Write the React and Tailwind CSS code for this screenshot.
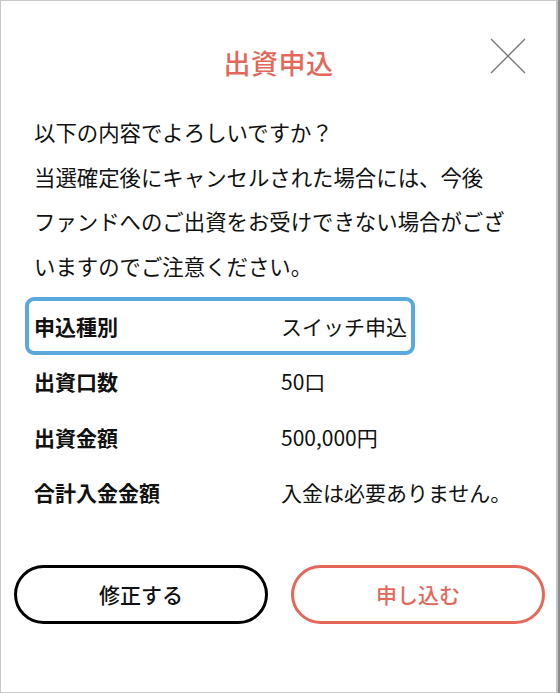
import React from 'react';

const font = { fontFamily: '"Noto Sans CJK JP", "Noto Sans", sans-serif' };

const rows = [
  { label: '出資口数', value: '50口' },
  { label: '出資金額', value: '500,000円' },
  { label: '合計入金金額', value: '入金は必要ありません。' },
];

function CloseIcon() {
  return (
    <svg width="36" height="36" viewBox="0 0 36 36" fill="none">
      <path d="M1 1L35 35M35 1L1 35" stroke="#7a7a7a" strokeWidth="1.4" />
    </svg>
  );
}

export default function App() {
  return (
    <div className="w-[560px] h-[693px] bg-[#8c8c8c] flex" style={font}>
      <div className="w-[558px] h-[693px] bg-white border-l border-t border-b border-[#c8c8c8] border-r-2 border-r-[#c4c4c4] flex flex-col text-[#111]">
        {/* ヘッダー */}
        <div className="relative pt-[42px] flex justify-center">
          <h1 className="text-[27px] leading-[40px] font-medium text-[#e3685a] tracking-[0.5px]">出資申込</h1>
          <button className="absolute right-[30px] top-[37px]">
            <CloseIcon />
          </button>
        </div>

        {/* 本文 */}
        <p className="mt-[27px] px-[33px] text-[21.4px] leading-[44.6px] whitespace-nowrap">
          以下の内容でよろしいですか？
          <br />
          当選確定後にキャンセルされた場合には、今後
          <br />
          ファンドへのご出資をお受けできない場合がござ
          <br />
          いますのでご注意ください。
        </p>

        {/* 内容 */}
        <div className="mt-[10px] text-[21px]">
          <div className="h-[56px] flex items-center">
            <div className="ml-[28px] w-[382px] h-[50px] flex items-center pl-[5px] outline-4 outline-[#5aa9dc] rounded-[5px]">
              <span className="w-[247px] font-bold">申込種別</span>
              <span>スイッチ申込</span>
            </div>
          </div>
          {rows.map((r) => (
            <div key={r.label} className="h-[55.5px] flex items-center pl-[33px]">
              <span className="w-[247px] font-bold">{r.label}</span>
              <span>{r.value}</span>
            </div>
          ))}
        </div>

        {/* ボタン */}
        <div className="mt-[44px] flex gap-[23px] pl-[13px]">
          <button className="w-[254px] h-[59px] rounded-full border-[3px] border-black text-[21px] font-medium text-[#111]">
            修正する
          </button>
          <button className="w-[254px] h-[59px] rounded-full border-[3px] border-[#e3685a] text-[21px] font-medium text-[#e3685a]">
            申し込む
          </button>
        </div>
      </div>
    </div>
  );
}
